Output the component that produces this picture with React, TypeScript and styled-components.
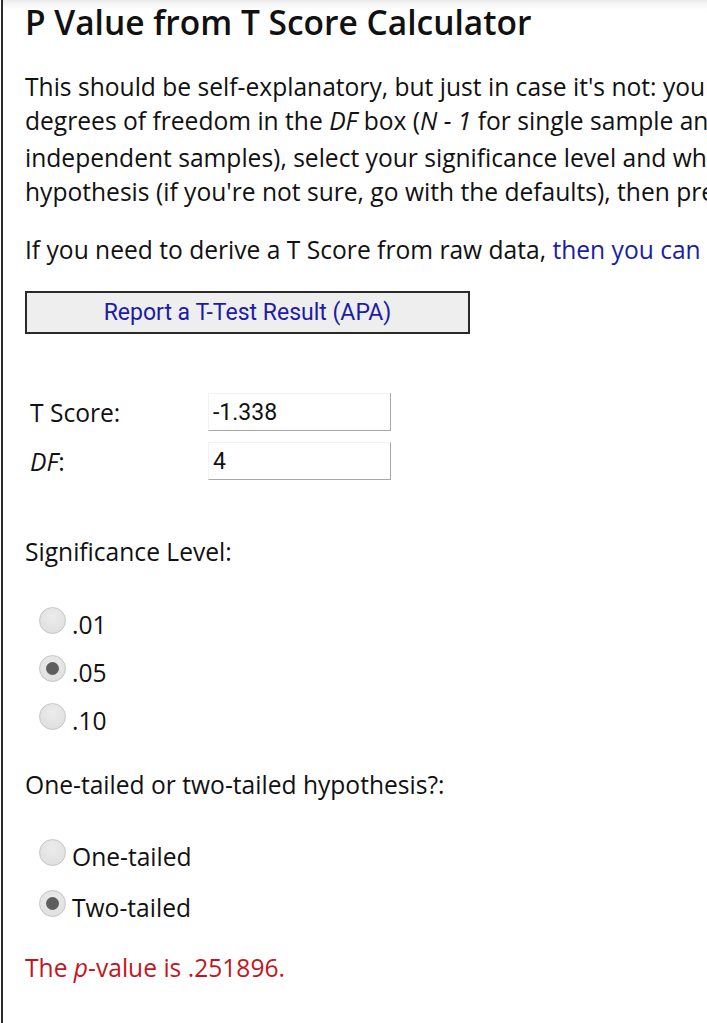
import styled, { createGlobalStyle } from "styled-components";

const GlobalStyle = createGlobalStyle`
  html, body {
    margin: 0;
    padding: 0;
    background: #fff;
    overflow: hidden;
  }
  body {
    font-family: "Open Sans", "Liberation Sans", sans-serif;
    color: #111;
  }
`;

export default function App() {
  return (
    <>
      <GlobalStyle />
      <Page>
        <Content>
          <Title>P Value from T Score Calculator</Title>
          <Intro>
            This should be self-explanatory, but just in case it's not: your t-score goes in the
            <br />
            degrees of freedom in the <i>DF</i> box (<i>N - 1</i> for single sample and dependent
            pairs, (<i>N</i>
            <sub>1</sub> - 1) + (<i>N</i>
            <sub>2</sub> - 1) for
            <br />
            independent samples), select your significance level and whether you're testing a one or
            <br />
            hypothesis (if you're not sure, go with the defaults), then press the button!
          </Intro>
          <Intro $gap={24}>
            If you need to derive a T Score from raw data,{" "}
            <TextLink href="#">then you can find a t-test calculator here</TextLink>.
          </Intro>
          <ReportButton type="button">Report a T-Test Result (APA)</ReportButton>

          <FieldTable>
            <tbody>
              <tr>
                <LabelCell>T Score:</LabelCell>
                <td>
                  <NumberInput defaultValue="-1.338" />
                </td>
              </tr>
              <tr>
                <LabelCell>
                  <i>DF</i>:
                </LabelCell>
                <td>
                  <NumberInput defaultValue="4" />
                </td>
              </tr>
            </tbody>
          </FieldTable>

          <Question $gap={45}>Significance Level:</Question>
          <RadioGroup $top={39} $gap={14}>
            <RadioRow>
              <Radio type="radio" name="sig" value="0.01" />
              .01
            </RadioRow>
            <RadioRow>
              <Radio type="radio" name="sig" value="0.05" defaultChecked />
              .05
            </RadioRow>
            <RadioRow>
              <Radio type="radio" name="sig" value="0.10" />
              .10
            </RadioRow>
          </RadioGroup>

          <Question $gap={30}>One-tailed or two-tailed hypothesis?:</Question>
          <RadioGroup $top={38} $gap={17}>
            <RadioRow>
              <Radio type="radio" name="tails" value="1" />
              One-tailed
            </RadioRow>
            <RadioRow>
              <Radio type="radio" name="tails" value="2" defaultChecked />
              Two-tailed
            </RadioRow>
          </RadioGroup>

          <Result>
            The <i>p</i>-value is .251896.
          </Result>
        </Content>
      </Page>
    </>
  );
}

const Page = styled.div`
  min-height: 1023px;
  margin-left: 1px;
  border-left: 2px solid #2b2b2b;
  box-shadow: inset 0 10px 10px -8px rgba(0, 0, 0, 0.12);
`;

const Content = styled.div`
  width: 1400px;
  padding-left: 22px;
  display: flex;
  flex-direction: column;
  align-items: flex-start;
  font-size: 24.6px;
`;

const Title = styled.h1`
  margin: 0;
  font-size: 33.5px;
  font-weight: 600;
  line-height: 44px;
  color: #111;
`;

const Intro = styled.p<{ $gap?: number }>`
  margin: ${(p) => p.$gap ?? 26}px 0 0;
  line-height: 34px;
  white-space: nowrap;

  sub {
    font-size: 15px;
    line-height: 1;
    vertical-align: -9px;
  }
`;

const TextLink = styled.a`
  color: #1c1ca6;
  text-decoration: none;
`;

const ReportButton = styled.button`
  margin-top: 24px;
  width: 445px;
  height: 43px;
  background: #eeeeee;
  border: 2px solid #2a2a2a;
  border-radius: 0;
  font-family: Roboto, "Liberation Sans", sans-serif;
  font-size: 23px;
  color: #1c1ca6;
  padding: 0;
`;

const FieldTable = styled.table`
  margin-top: 49px;
  border-collapse: separate;
  border-spacing: 0 9px;
  font-size: inherit;
`;

const LabelCell = styled.td`
  width: 172px;
  padding: 0 5px;
`;

const NumberInput = styled.input`
  display: block;
  box-sizing: border-box;
  width: 183px;
  height: 38px;
  margin: 0;
  padding: 0 4px;
  border: 1px solid;
  border-color: #f2f2f2 #a8a8a8 #a8a8a8 #f2f2f2;
  font-family: Roboto, "Liberation Sans", sans-serif;
  font-size: 23px;
  color: #111;
  outline: none;
`;

const Question = styled.div<{ $gap: number }>`
  margin-top: ${(p) => p.$gap}px;
  line-height: 34px;
`;

const RadioGroup = styled.div<{ $top: number; $gap: number }>`
  margin-top: ${(p) => p.$top}px;
  display: flex;
  flex-direction: column;
  gap: ${(p) => p.$gap}px;
`;

const RadioRow = styled.label`
  display: flex;
  align-items: center;
  line-height: 34px;
`;

const Radio = styled.input`
  appearance: none;
  box-sizing: border-box;
  width: 27px;
  height: 27px;
  margin: -10px 6px 0 14px;
  border-radius: 50%;
  border: 1px solid #c4c4c4;
  background: radial-gradient(circle at 50% 35%, #ececec 0%, #dcdcdc 100%);
  display: grid;
  place-items: center;

  &:checked::after {
    content: "";
    width: 13px;
    height: 13px;
    border-radius: 50%;
    background: #5e5e5e;
  }
`;

const Result = styled.div`
  margin-top: 26px;
  line-height: 34px;
  color: #c2161e;
`;
